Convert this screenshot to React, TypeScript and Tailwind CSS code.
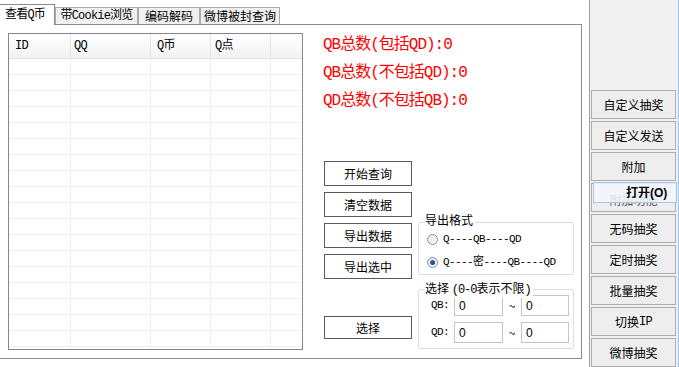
const mono = "font-['Liberation_Mono','Noto_Sans_CJK_SC',monospace]"

const cols = [
  { label: "ID", w: "w-[62px] pl-[6px]" },
  { label: "QQ", w: "w-[80px] pl-[3px]" },
  { label: "Q币", w: "w-[60px] pl-[6px]" },
  { label: "Q点", w: "w-[60px] pl-[4px]" },
]

function Tabs() {
  return (
    <div className="flex h-[25px] items-end border-b border-[#898c95]">
      <div className="relative z-10 -mb-px flex h-[21px] w-[55px] items-center border-r border-t border-[#898c95] bg-white pl-[5px] text-[12px]">
        <span className={`${mono} tracking-[-0.8px]`}>查看Q币</span>
      </div>
      <div className="flex h-[17px] w-[83px] items-center justify-center border-x border-t border-[#acacac] bg-[#f0f0f0]">
        <span className={`${mono} text-[12px] tracking-[-0.8px]`}>带Cookie浏览</span>
      </div>
      <div className="flex h-[17px] w-[62px] items-center justify-center border-x border-t border-[#acacac] bg-[#f0f0f0]">
        编码解码
      </div>
      <div className="flex h-[17px] w-[80px] items-center justify-center border-x border-t border-[#acacac] bg-[#f0f0f0]">
        微博被封查询
      </div>
    </div>
  )
}

function List() {
  const rows = Array.from({ length: 19 })
  return (
    <div className="ml-[8px] mt-[8px] h-[317px] w-[295px] overflow-hidden border border-[#828790] bg-white">
      <div className="flex h-[25px] border-b border-[#e5e5e5] bg-gradient-to-b from-white to-[#f1f2f4]">
        {cols.map((c) => (
          <div key={c.label} className={`${c.w} ${mono} flex items-center border-r border-[#e5e5e5] text-[12px] tracking-[-0.8px]`}>
            {c.label}
          </div>
        ))}
        <div className="flex-1" />
      </div>
      {rows.map((_, i) => (
        <div key={i} className="flex h-[16px] border-b border-[#f0f0f0]">
          <div className="w-[62px] border-r border-[#f0f0f0]" />
          <div className="w-[80px] border-r border-[#f0f0f0]" />
          <div className="w-[60px] border-r border-[#f0f0f0]" />
          <div className="w-[60px] border-r border-[#f0f0f0]" />
          <div className="flex-1" />
        </div>
      ))}
    </div>
  )
}

function Btn({ children, h = "h-[25px]" }: { children: React.ReactNode; h?: string }) {
  return (
    <div className={`${h} flex items-center justify-center border border-[#5a5a5a] bg-white text-[12px]`}>
      {children}
    </div>
  )
}

function Radio({ checked }: { checked?: boolean }) {
  return (
    <div className="flex h-[11px] w-[11px] items-center justify-center rounded-full border border-[#929292] bg-gradient-to-br from-[#e6e6e6] to-[#f8f8f8]">
      {checked && <div className="h-[5px] w-[5px] rounded-full bg-gradient-to-br from-[#2a7fd4] to-[#0c3a6b]" />}
    </div>
  )
}

function Field({ value }: { value: string }) {
  return (
    <input
      readOnly
      value={value}
      className="h-[21px] w-full min-w-0 border border-[#c5c5c5] bg-white pl-[4px] font-['Liberation_Sans',sans-serif] text-[12px] outline-none"
    />
  )
}

function RangeRow({ label, className = "" }: { label: string; className?: string }) {
  return (
    <div className={`flex items-center pl-[12px] ${className}`}>
      <span className={`${mono} w-[23px] shrink-0 text-[11px] tracking-[-0.6px]`}>{label}</span>
      <div className="w-[49px] shrink-0"><Field value="0" /></div>
      <span className="w-[18px] shrink-0 text-center leading-[14px]">~</span>
      <div className="w-[48px] shrink-0"><Field value="0" /></div>
    </div>
  )
}

function Side() {
  return (
    <div className="ml-[20px] mt-[6px] flex flex-col">
      <div className={`${mono} text-[16px] leading-[28px] tracking-[-1px] text-[#ff0000]`}>
        <div>QB总数(包括QD):0</div>
        <div>QB总数(不包括QD):0</div>
        <div>QD总数(不包括QB):0</div>
      </div>
      <div className="mt-[46px] flex">
        <div className="ml-px flex w-[88px] flex-col gap-[6px]">
          <Btn>开始查询</Btn>
          <Btn>清空数据</Btn>
          <Btn>导出数据</Btn>
          <Btn>导出选中</Btn>
          <div className="mt-[31px]">
            <Btn h="h-[23px]">选择</Btn>
          </div>
        </div>
        <div className="ml-[6px] mt-[61px] flex w-[156px] flex-col">
          <div className="relative h-[53px] rounded-[3px] border border-[#d5dfe5] pt-[5px]">
            <span className="absolute left-[5px] top-[-11px] bg-white px-px text-[12px] leading-[16px]">导出格式</span>
            <div className="flex h-[23px] items-center gap-[5px] pl-[8px]">
              <Radio />
              <span className={`${mono} text-[11px] tracking-[-0.6px]`}>Q----QB----QD</span>
            </div>
            <div className="flex h-[23px] items-center gap-[5px] pl-[8px]">
              <Radio checked />
              <span className={`${mono} text-[11px] tracking-[-0.6px]`}>Q----密----QB----QD</span>
            </div>
          </div>
          <div className="relative mt-[14px] h-[60px] rounded-[3px] border border-[#d5dfe5] pt-[5px]">
            <span className="absolute left-[5px] top-[-10px] bg-white px-px text-[12px] leading-[16px]">
              选择 <span className={`${mono} tracking-[-1px]`}>(0-0</span>表示不限<span className={mono}>)</span>
            </span>
            <RangeRow label="QB:" />
            <RangeRow label="QD:" className="mt-[6px]" />
          </div>
        </div>
      </div>
    </div>
  )
}

function SideBtn({ children }: { children: React.ReactNode }) {
  return (
    <div className="relative flex h-[29px] shrink-0 items-center justify-center border border-[#adadad] bg-[#eeeeee] text-[12px]">
      {children}
    </div>
  )
}

function RightPanel() {
  return (
    <div className="flex w-[89px] flex-col gap-[2px] border-r border-[#9cc4ec] bg-[#f0f0f0] pl-px pr-[2px] pt-[90px]">
      <SideBtn>自定义抽奖</SideBtn>
      <SideBtn>自定义发送</SideBtn>
      <SideBtn>附加</SideBtn>
      <SideBtn>
        <span className="translate-y-[2px] text-[#555]">附加功能</span>
        <div className="absolute left-[1px] top-[-2px] flex h-[21px] w-[84px] items-center border border-[#a6c8ef] bg-[#f2f7fd]/85 pl-[32px] font-['Liberation_Sans','Noto_Sans_CJK_SC',sans-serif] text-[12px] font-bold">
          打开(O)
        </div>
      </SideBtn>
      <SideBtn>无码抽奖</SideBtn>
      <SideBtn>定时抽奖</SideBtn>
      <SideBtn>批量抽奖</SideBtn>
      <SideBtn>
        切换<span className={`${mono} tracking-[-0.8px]`}>IP</span>
      </SideBtn>
      <SideBtn>微博抽奖</SideBtn>
    </div>
  )
}

export default function App() {
  return (
    <div className="flex h-[367px] w-[679px] overflow-hidden bg-white font-['Noto_Sans_CJK_SC',sans-serif] text-[12px] text-black">
      <div className="w-[589px] shrink-0">
        <div className="w-[582px]">
          <Tabs />
          <div className="flex h-[334px] items-start border-b border-r border-[#898c95]">
            <List />
            <Side />
          </div>
        </div>
      </div>
      <div className="w-px shrink-0 bg-[#a0a0a0]" />
      <RightPanel />
    </div>
  )
}
